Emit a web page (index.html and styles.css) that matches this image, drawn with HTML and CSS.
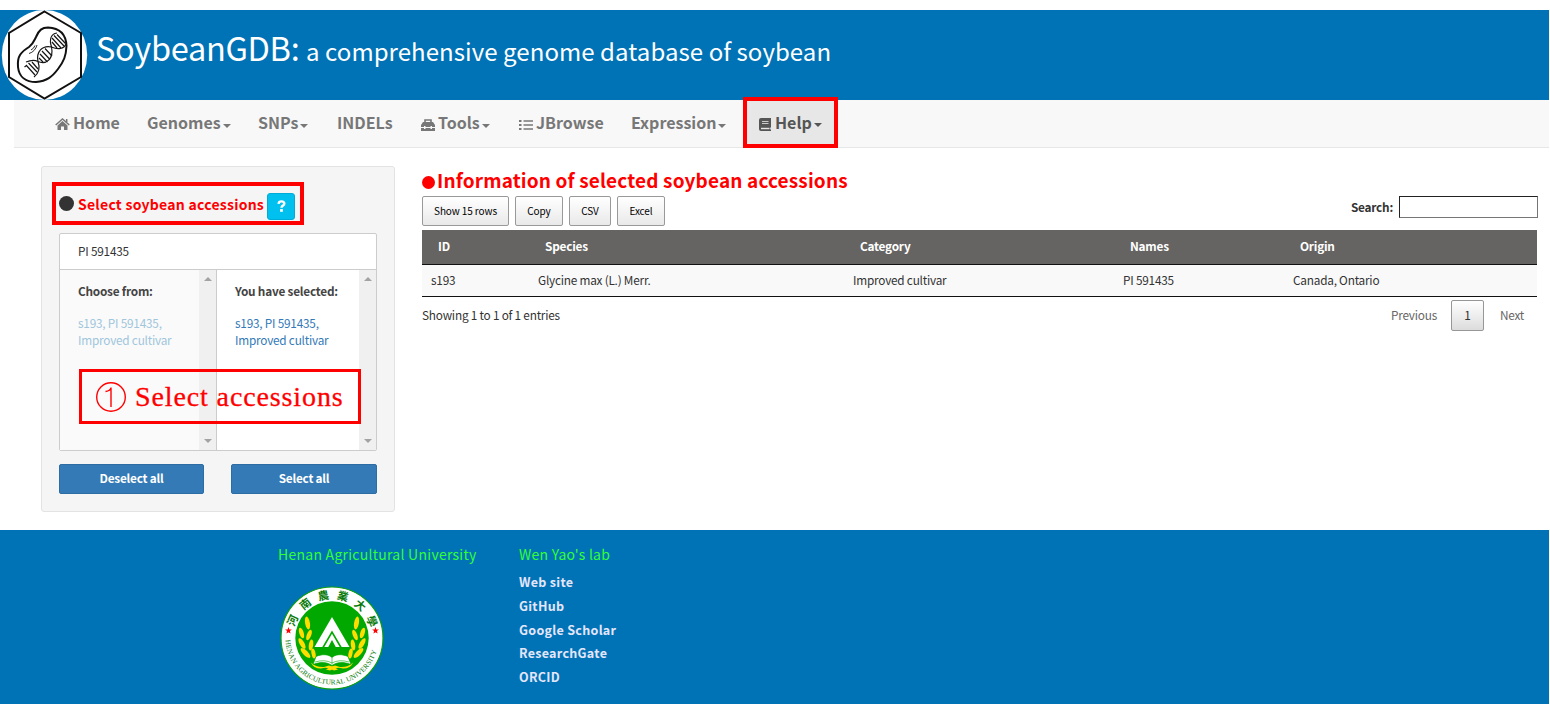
FILE: index.html
```html
<!DOCTYPE html>
<html lang="en">
<head>
<meta charset="utf-8">
<title>SoybeanGDB</title>
<link rel="stylesheet" href="styles.css">
</head>
<body>
<header class="banner">
  <svg class="logo" viewBox="0 0 90 90">
    <ellipse cx="44.500" cy="45" rx="42.700" ry="45" fill="#fff"/>
    <path d="M44.500 1.500 81 23v44L44.500 88.500 9 67V23Z" fill="none" stroke="#111" stroke-width="2"/>
    <path d="M36 27C39 20 42 17.500 48 17.500C59 18 66 24 66.500 36C66 46 64 51 58 59C52 67 47 71 36 72C26 72 19 67 18 57C17 46 21 42 29 37C33 34 34 31 36 27Z" fill="none" stroke="#111" stroke-width="2"/>
    <g fill="none" stroke="#161616" stroke-width="1.200">
      <path d="M26 52C31 50 35 50 38 51.500C46 55 54 49 51.500 37C49 29 51 24 57 23M34 67C39 63 40 57 38 51.500C36 42 42 35 51.500 37C58 40 64 39 66 34"/>
      <path d="m24.500 57 2-1.500M26 55l9 10M28.500 53l8.500 9M32 52l6 7M39 48l4 4M40 44l7.500 8M42 41l8 8.500M45 38.500l7 7.500M52 32l5 6M52 28l9 10M54 25.500l10 10.500M57 24.500l8.500 9"/>
      <path d="M37 35C36 39 33 42.500 29 43.500M35 35.500q-1 3-4 4.500" stroke-width=".9"/>
    </g>
  </svg>
  <h1 class="title"><span class="brand">SoybeanGDB:</span><span class="tagline">a comprehensive genome database of soybean</span></h1>
</header>

<nav class="navbar">
  <a class="nav-item"><svg class="icon home" viewBox="0 0 15 13"><path d="M7.500 2.900 12.500 7.500V12H9V8.500H6V12H2.500V7.500Z" fill="#777"/><path d="M.7 7 7.500 1l6.800 6M11.700 1v3" fill="none" stroke="#777" stroke-width="1.500"/></svg><span>Home</span></a>
  <a class="nav-item"><span>Genomes</span><i class="caret"></i></a>
  <a class="nav-item"><span>SNPs</span><i class="caret"></i></a>
  <a class="nav-item"><span>INDELs</span></a>
  <a class="nav-item"><svg class="icon toolbox" viewBox="0 0 14 12"><path d="M4 3V1h6v2" fill="none" stroke="#777" stroke-width="1.600"/><path d="M2 3h10l2 3v2h-3V7H9.500v1h-5V7H3v1H0V6ZM0 9h3v1h1.500V9h5v1H11V9h3v3H0Z" fill="#777"/></svg><span>Tools</span><i class="caret"></i></a>
  <a class="nav-item"><svg class="icon list" viewBox="0 0 14 12"><path d="M4.500 2H14M4.500 6H14M4.500 10H14" stroke="#777" stroke-width="1.600"/><path d="M0 2h2.500M0 6h2.500M0 10h2.500" stroke="#777" stroke-width="2"/></svg><span>JBrowse</span></a>
  <a class="nav-item"><span>Expression</span><i class="caret"></i></a>
  <a class="nav-item active"><svg class="icon book" viewBox="0 0 12 13"><path d="M2 0h10v9.500h-.8v2H12V13H2Q0 13 0 11V2Q0 0 2 0Z" fill="#555"/><path d="M3 3.500h6.500M3 5.500h6.500" stroke="#e7e7e7" stroke-width=".8"/><path d="M2 10.500h8.500" stroke="#e7e7e7" stroke-width="1.400"/></svg><span>Help</span><i class="caret"></i></a>
</nav>

<main class="content">
  <aside class="panel">
    <div class="panel-title"><i class="dot dark"></i><span>Select soybean accessions</span><button class="hint"><svg viewBox="0 0 9 12"><path d="M1.500 3.800C1.700 2.200 2.700 1.400 4.400 1.400 6.200 1.400 7.300 2.300 7.300 3.700 7.300 5.600 4.500 5.600 4.500 7.800" fill="none" stroke="#fff" stroke-width="2.400"/><path d="M3.100 9.100h2.800v2.700H3.100Z" fill="#fff"/></svg></button></div>
    <div class="picker">
      <div class="picker-search">PI 591435</div>
      <div class="picker-columns">
        <section class="choices from">
          <div class="choices-body"><h4>Choose from:</h4><a>s193, PI 591435,<br>Improved cultivar</a></div>
          <div class="scroll"><i class="up"></i><i class="down"></i></div>
        </section>
        <section class="choices">
          <div class="choices-body"><h4>You have selected:</h4><a>s193, PI 591435,<br>Improved cultivar</a></div>
          <div class="scroll"><i class="up"></i><i class="down"></i></div>
        </section>
      </div>
      <div class="callout"><svg class="step" viewBox="0 0 30 30"><circle cx="15" cy="15" r="14.300"/><path d="M9.500 9.500q5-.5 5.500-4V25"/></svg><span>Select accessions</span></div>
    </div>
    <div class="panel-actions"><button class="deselect">Deselect all</button><button>Select all</button></div>
  </aside>

  <section class="results">
    <h2 class="results-title"><i class="dot red"></i><span>Information of selected soybean accessions</span></h2>
    <div class="toolbar">
      <button class="b-rows">Show 15 rows</button><button class="b-copy">Copy</button><button class="b-csv">CSV</button><button class="b-excel">Excel</button>
      <label class="search"><span>Search:</span><input type="text"></label>
    </div>
    <table class="grid">
      <colgroup><col class="c-id"><col class="c-species"><col class="c-category"><col class="c-names"><col></colgroup>
      <thead><tr><th>ID</th><th>Species</th><th>Category</th><th>Names</th><th>Origin</th></tr></thead>
      <tbody><tr><td>s193</td><td>Glycine max (L.) Merr.</td><td>Improved cultivar</td><td>PI 591435</td><td>Canada, Ontario</td></tr></tbody>
    </table>
    <div class="table-foot">
      <span class="info">Showing 1 to 1 of 1 entries</span>
      <span class="prev">Previous</span><span class="page">1</span><span class="next">Next</span>
    </div>
  </section>
</main>

<footer class="footer">
  <section class="university">
    <h3>Henan Agricultural University</h3>
    <svg class="emblem" viewBox="0 0 104 104">
      <defs>
        <path id="ring-top" d="M12.800 52a39.200 39.200 0 0 1 78.400 0"/>
        <path id="ring-bottom" d="M5.500 52a46.500 46.500 0 0 0 93 0"/>
        <g id="laurel" fill="#fd0">
          <ellipse cx="27.500" cy="37" rx="2.400" ry="6.500" transform="rotate(-10 27.500 37)"/>
          <ellipse cx="21.500" cy="47" rx="2.200" ry="5.500" transform="rotate(-18 21.500 47)"/>
          <ellipse cx="29" cy="49" rx="2.200" ry="5.500" transform="rotate(22 29 49)"/>
          <ellipse cx="22" cy="57.500" rx="2.300" ry="6" transform="rotate(-30 22 57.500)"/>
          <ellipse cx="31" cy="59" rx="2.200" ry="5.500" transform="rotate(8 31 59)"/>
          <ellipse cx="25.500" cy="67" rx="2.400" ry="6.500" transform="rotate(-45 25.500 67)"/>
          <ellipse cx="33.500" cy="67.500" rx="2" ry="5" transform="rotate(-12 33.500 67.500)"/>
          <path d="M31 76.500q5 5 13 4.500l5-1.500q5 1 9 4l-4 1q-6-4-13-2-8 0-10-6Z"/>
        </g>
      </defs>
      <circle cx="52" cy="52" r="51" fill="#fff" stroke="#0ca00c" stroke-width="1.200"/>
      <circle cx="52" cy="52" r="36.700" fill="#00a800"/>
      <use href="#laurel"/><use href="#laurel" transform="matrix(-1 0 0 1 104 0)"/>
      <path d="M52 31 69.500 61h-35Z" fill="#fff"/>
      <path d="M43 61.500 52 46l9 15.500" fill="none" stroke="#00a800" stroke-width="1.600"/>
      <path d="m52 54 4 7.500h-8Z" fill="#00a800"/>
      <path d="M36 70.500c7-3 13-2 16 1 3-3 9-4 16-1l3 8c-8-3-14-2.500-19 1-5-3.500-11-4-19-1Z" fill="#fff" stroke="#00a800" stroke-width=".7"/>
      <path d="M52 71.500v7M35 76q10-3 17 1 7-4 17-1" fill="none" stroke="#00a800" stroke-width=".6"/>
      <g class="ring-han"><text><textPath href="#ring-top" startOffset="11">河</textPath></text><text><textPath href="#ring-top" startOffset="30">南</textPath></text><text><textPath href="#ring-top" startOffset="48">農</textPath></text><text><textPath href="#ring-top" startOffset="66">業</textPath></text><text><textPath href="#ring-top" startOffset="84">大</textPath></text><text><textPath href="#ring-top" startOffset="102">學</textPath></text></g>
      <text class="ring-latin"><textPath href="#ring-bottom" startOffset="2">HENAN AGRICULTURAL UNIVERSITY</textPath></text>
      <path id="star" d="m8.500 41 .9 2.400 2.500.1-2 1.600.7 2.500-2.100-1.400-2.100 1.400.7-2.500-2-1.600 2.500-.1Z" fill="red"/>
      <use href="#star" x="87"/>
    </svg>
  </section>
  <section class="lab">
    <h3>Wen Yao's lab</h3>
    <a>Web site</a><a>GitHub</a><a>Google Scholar</a><a>ResearchGate</a><a>ORCID</a>
  </section>
</footer>
</body>
</html>
```
FILE: styles.css
```css
* { box-sizing: border-box; }
body { margin: 0; padding: 10px 1px 0 0; background: #fff; color: #333; font: 11.800px/18px "Noto Sans CJK SC", sans-serif; letter-spacing: -.22px; height: 710px; overflow: hidden; }
h1, h2, h3, h4 { margin: 0; font-weight: 400; }
button, input { font: inherit; letter-spacing: inherit; padding: 0; margin: 0; }
.banner { display: flex; height: 90px; background: #0073b7; color: #fff; }
.logo { width: 90px; height: 90px; }
.title { display: flex; align-items: baseline; padding-left: 6px; line-height: 74px; white-space: nowrap; }
.brand { font-size: 32.500px; letter-spacing: -.3px; width: 210px; }
.tagline { font-size: 24px; letter-spacing: .07px; }

.navbar { display: grid; grid-template-columns: 92px 111px 79px 84px 98px 112px 112px 95px; height: 48px; margin-left: 14px; padding-left: 41px; background: #f8f8f8; border-bottom: 1px solid #e7e7e7; }
.nav-item { display: flex; align-items: center; color: #777; font-size: 16px; font-weight: 700; letter-spacing: 0; line-height: 42px; height: 44px; white-space: nowrap; }
.icon { flex: none; margin: 5px 3px 0 0; }
.home { width: 15px; height: 13px; }
.toolbox, .list { width: 14px; height: 12px; }
.book { width: 12px; height: 13px; margin-right: 4px; }
.caret { border: 4px solid transparent; border-top-color: currentColor; border-bottom: 0; margin: 7px 0 0 2px; }
.active { color: #555; background: #e7e7e7; border: 4px solid red; height: 51px; margin-top: -3px; padding: 0 0 2px 12px; }

.content { display: flex; height: 382px; padding: 18px 12px 0 41px; }
.panel { width: 354px; height: 346px; padding: 15px 17px; background: #f5f5f5; border: 1px solid #e3e3e3; border-radius: 3px; }
.panel-title { display: flex; align-items: center; width: 252px; height: 43px; margin-left: -7px; padding-left: 3px; border: 4px solid red; color: red; font-size: 14px; font-weight: 700; letter-spacing: .25px; white-space: nowrap; }
.panel-title span { width: 189px; }
.dot { flex: none; border-radius: 50%; }
.dark { width: 15px; height: 15px; background: #333; margin-right: 4px; }
.red { width: 13px; height: 13px; background: red; margin: 5px 2px 0 0; }
.hint { width: 28px; height: 27px; margin-top: 5px; background: #00c0ef; border: 1px solid #00acd6; border-radius: 3px; display: grid; place-items: center; }
.hint svg { width: 9px; height: 12px; }
.picker { position: relative; height: 218px; margin-top: 8px; border: 1px solid #ccc; border-radius: 2px; background: #fff; }
.picker-search { height: 36px; padding-left: 18px; line-height: 34px; border-bottom: 1px solid #ccc; }
.picker-columns { display: flex; height: 180px; }
.choices { display: flex; flex: 1; }
.choices-body { flex: 1; padding: 12px 0 0 18px; white-space: nowrap; }
.choices h4 { font-weight: 700; color: #444; line-height: 18px; margin-bottom: 14px; }
.choices a { display: block; color: #337ab7; line-height: 17px; }
.from { flex: 0 0 157px; background: #fafafa; border-right: 1px solid #ccc; }
.from a { color: #9fc6dc; }
.scroll { display: flex; flex-direction: column; justify-content: space-between; align-items: center; width: 17px; padding: 7px 0; background: #f0f0f0; }
.up, .down { border: 4px solid transparent; }
.up { border-top: 0; border-bottom-color: #a3a3a3; }
.down { border-bottom: 0; border-top-color: #a3a3a3; }
.callout { position: absolute; left: 19px; top: 135px; width: 282px; height: 55px; border: 3px solid red; color: red; display: flex; align-items: center; padding-left: 14px; font: 28px "Liberation Serif", serif; letter-spacing: .88px; white-space: nowrap; -webkit-text-stroke: .3px red; }
.step { width: 30px; height: 30px; margin-right: 9px; fill: none; stroke: red; stroke-width: 1.400; }
.panel-actions { display: flex; justify-content: space-between; margin-top: 13px; }
.panel-actions button { width: 146px; height: 30px; padding-bottom: 2px; background: #337ab7; border: 1px solid #2e6da4; border-radius: 2px; color: #fff; font-weight: 700; }
.panel-actions .deselect { width: 145px; }

.results { flex: 1; margin-left: 27px; }
.results-title { display: flex; align-items: center; height: 30px; padding-bottom: 2px; color: red; font-size: 19px; font-weight: 700; letter-spacing: .15px; white-space: nowrap; }
.toolbar { display: flex; height: 30px; gap: 6px; }
.toolbar button { height: 30px; border: 1px solid #999; border-radius: 2px; background: linear-gradient(#fff, #e9e9e9); color: #000; font-size: 10px; letter-spacing: -.1px; }
.b-rows { width: 87px; }
.b-copy, .b-excel { width: 48px; }
.b-csv { width: 42px; }
.search { display: flex; margin: 0 -1px 0 auto; gap: 6px; font-weight: 700; line-height: 22px; }
.search input { width: 139px; height: 22px; border: 1px solid #767676; border-top-color: #222; border-left-color: #222; background: #fff; }
.grid { width: 100%; margin-top: 4px; border-collapse: separate; border-spacing: 0; table-layout: fixed; text-align: left; }
.c-id { width: 107px; }
.c-species { width: 315px; }
.c-category { width: 270px; }
.c-names { width: 170px; }
.grid th { height: 35px; padding: 0 0 2px 16px; background: #666462; color: #fff; border-bottom: 1px solid #111; }
.grid td { height: 32px; padding: 0 0 1px 9px; background: #f9f9f9; border-bottom: 1px solid #111; }
.table-foot { display: flex; align-items: center; height: 37px; color: #666; }
.info { flex: 1; padding-bottom: 2px; color: #333; }
.prev, .next { padding-bottom: 1px; }
.page { width: 33px; height: 31px; margin: 0 16px 0 14px; border: 1px solid #979797; border-radius: 2px; background: linear-gradient(#fff, #dcdcdc); color: #333; line-height: 28px; text-align: center; }
.next { width: 37px; }

.footer { display: flex; height: 174px; padding: 13px 0 0 278px; background: #0073b7; }
.footer h3 { color: #3f3; font-size: 14px; letter-spacing: .26px; line-height: 22px; white-space: nowrap; }
.university { width: 241px; }
.emblem { display: block; width: 104px; height: 104px; margin: 21px 0 0 2px; }
.ring-han text { font: 700 11px "Noto Sans CJK SC", sans-serif; letter-spacing: 0; fill: #087a08; }
.ring-latin { font: 7.200px "Liberation Serif", serif; letter-spacing: .15px; fill: #087a08; }
.lab { display: flex; flex-direction: column; }
.lab h3 { margin-bottom: 5px; }
.lab a { color: #e6e6fa; font-size: 12.500px; font-weight: 700; letter-spacing: .3px; line-height: 23.800px; }
```
